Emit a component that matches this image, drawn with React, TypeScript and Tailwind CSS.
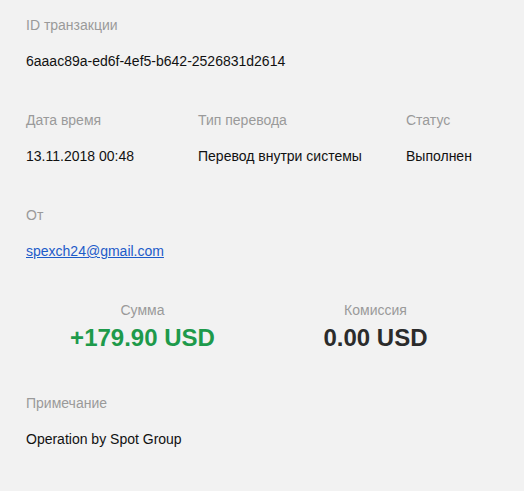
import React from "react";

const font = { fontFamily: '"Liberation Sans", Arial, Helvetica, sans-serif' };

function Field({ label, children }: { label: string; children: React.ReactNode }) {
  return (
    <div className="flex flex-col">
      <div className="text-[14px] leading-[16px] text-[#9a9a9a]">{label}</div>
      <div className="mt-[20px] text-[14px] leading-[16px] text-[#111]">{children}</div>
    </div>
  );
}

export default function App() {
  return (
    <div
      className="w-[524px] h-[491px] bg-[#f2f2f2] pl-[26px] pr-[32px] pt-[17px] flex flex-col"
      style={font}
    >
      <Field label="ID транзакции">6aaac89a-ed6f-4ef5-b642-2526831d2614</Field>

      <div className="mt-[43px] grid grid-cols-[172px_208px_1fr]">
        <Field label="Дата время">13.11.2018 00:48</Field>
        <Field label="Тип перевода">Перевод внутри системы</Field>
        <Field label="Статус">Выполнен</Field>
      </div>

      <div className="mt-[43px]">
        <Field label="От">
          <a href="#" className="text-[#1d5bc9] underline">
            spexch24@gmail.com
          </a>
        </Field>
      </div>

      <div className="mt-[43px] grid grid-cols-2">
        <div className="flex flex-col items-center">
          <div className="text-[14px] leading-[16px] text-[#9a9a9a]">Сумма</div>
          <div className="mt-[6px] text-[24px] leading-[28px] font-bold text-[#1e9a4b]">+179.90 USD</div>
        </div>
        <div className="flex flex-col items-center">
          <div className="text-[14px] leading-[16px] text-[#9a9a9a]">Комиссия</div>
          <div className="mt-[6px] text-[24px] leading-[28px] font-bold text-[#2b2b2b]">0.00 USD</div>
        </div>
      </div>

      <div className="mt-[43px]">
        <Field label="Примечание">Operation by Spot Group</Field>
      </div>
    </div>
  );
}
